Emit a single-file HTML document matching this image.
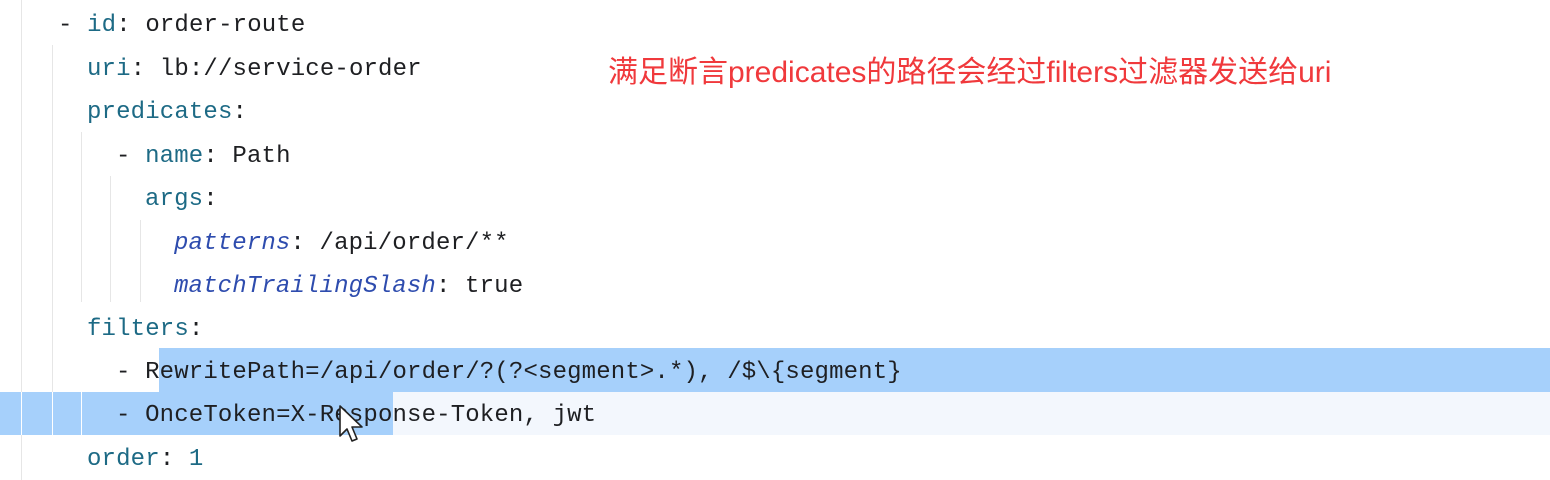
<!DOCTYPE html>
<html><head><meta charset="utf-8"><style>
html,body{margin:0;padding:0;background:#fff;width:1550px;height:480px;overflow:hidden;position:relative}
.l{position:absolute;left:0;height:43px;line-height:43px;font-family:"Liberation Mono",monospace;font-size:24px;letter-spacing:0.15px;color:#1e1f22;white-space:pre}
.k{color:#1d6a85}.i{color:#2e4cae;font-style:italic}.n{color:#1d6a85}
.g{position:absolute;width:1px;background:#e6e6e6}
</style></head><body>
<div style="position:absolute;left:159px;top:348px;width:1391px;height:44px;background:#a6d0fb"></div>
<div style="position:absolute;left:0;top:392px;width:1550px;height:43px;background:#f3f7fd"></div>
<div style="position:absolute;left:0;top:392px;width:393px;height:43px;background:#a6d0fb"></div>
<div class="g" style="left:21px;top:0;height:480px"></div>
<div class="g" style="left:52px;top:45px;height:390px"></div>
<div class="g" style="left:81px;top:132px;height:170px"></div>
<div class="g" style="left:110px;top:176px;height:126px"></div>
<div class="g" style="left:140px;top:220px;height:82px"></div>
<div class="g" style="left:52px;top:392px;height:43px;background:#fff"></div>
<div class="g" style="left:21px;top:392px;height:43px;background:#fff"></div>
<div class="g" style="left:81px;top:392px;height:43px;background:#fff"></div>
<div class="l" style="top:4px;left:58px">- <span class="k">id</span>: order-route</div>
<div class="l" style="top:48px;left:87px"><span class="k">uri</span>: lb://service-order</div>
<div class="l" style="top:91px;left:87px"><span class="k">predicates</span>:</div>
<div class="l" style="top:135px;left:116px">- <span class="k">name</span>: Path</div>
<div class="l" style="top:178px;left:145px"><span class="k">args</span>:</div>
<div class="l" style="top:222px;left:174px"><span class="i">patterns</span>: /api/order/**</div>
<div class="l" style="top:265px;left:174px"><span class="i">matchTrailingSlash</span>: true</div>
<div class="l" style="top:308px;left:87px"><span class="k">filters</span>:</div>
<div class="l" style="top:351px;left:116px">- RewritePath=/api/order/?(?&lt;segment&gt;.*), /$\{segment}</div>
<div class="l" style="top:394px;left:116px">- OnceToken=X-Response-Token, jwt</div>
<div class="l" style="top:438px;left:87px"><span class="k">order</span>: <span class="n">1</span></div>
<div style="position:absolute;left:608px;top:54px;font-family:'Liberation Sans','Noto Sans CJK SC',sans-serif;font-size:30px;line-height:38px;color:#f0393c;white-space:nowrap">满足断言predicates的路径会经过filters过滤器发送给uri</div>
<svg style="position:absolute;left:338px;top:404px" width="28" height="42" viewBox="0 0 28 42"><path d="M2 2 L2 32 L9 25 L14 37 L19 35 L14 23 L24 23 Z" fill="#fff" stroke="#222" stroke-width="1.6" stroke-linejoin="round"/></svg>
</body></html>
